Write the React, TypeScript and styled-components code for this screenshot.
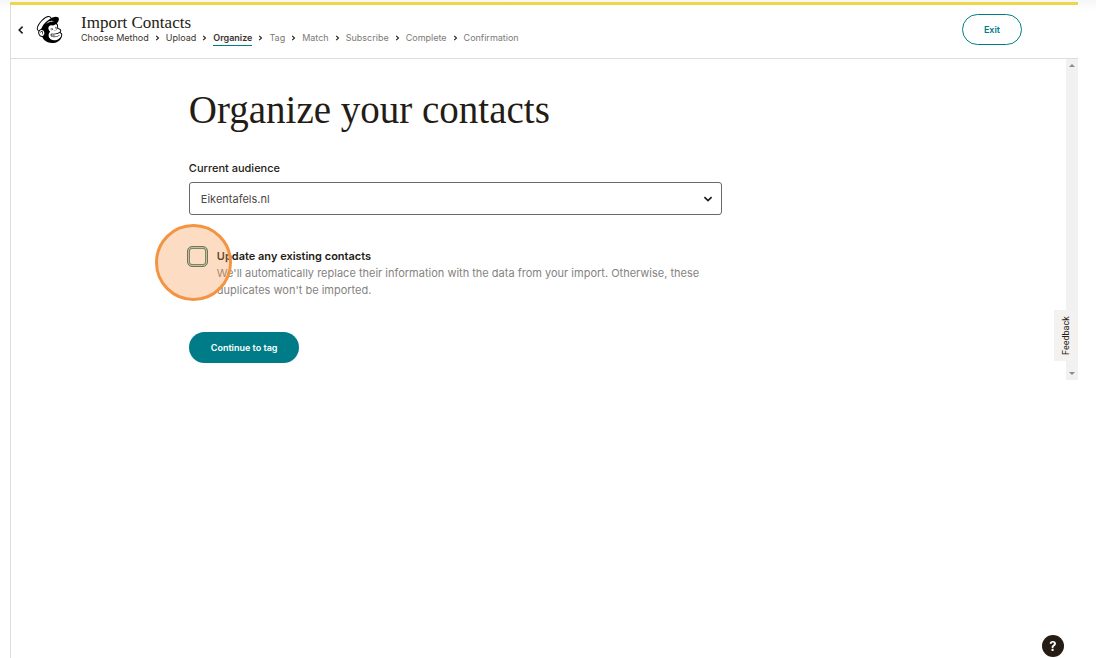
import React from "react";
import styled, { createGlobalStyle } from "styled-components";
import { SiMailchimp } from "react-icons/si";

const sans = `Inter, "Liberation Sans", sans-serif`;
const serif = `"Liberation Serif", serif`;
const ink = "#241c15";
const teal = "#007c89";

const GlobalStyle = createGlobalStyle`
  * { box-sizing: border-box; }
  body { margin: 0; background: #fff; color: ${ink}; font-family: ${sans}; font-size: 11px; }
  h1, h2, p, ol { margin: 0; padding: 0; }
  button, select { font-family: inherit; cursor: pointer; }
`;

const Page = styled.div`
  min-height: 100vh;
  padding: 2px 18px 0 10px;
  display: flex;
  flex-direction: column;
  background: linear-gradient(#f6f6f6, #fff 10px);
`;

const Frame = styled.div`
  flex: 1;
  border-top: 3px solid #efd648;
  background: #fff;
  display: flex;
`;

const Body = styled.div`
  flex: 1;
  border-left: 1px solid #dedddc;
`;

const Header = styled.header`
  display: flex;
  align-items: center;
  height: 54px;
  padding: 0 56px 4px 5px;
  border-bottom: 1px solid #dedddc;
`;

const BackButton = styled.button`
  display: flex;
  padding: 0;
  border: 0;
  background: none;
  color: ${ink};
`;

const Logo = styled.a`
  display: flex;
  margin: 0 18px 0 10px;
  color: #000;
`;

const Titles = styled.div`
  flex: 1;
`;

const Title = styled.h1`
  font: 400 17px/16px ${serif};
`;

const Steps = styled.ol`
  display: flex;
  list-style: none;
  font-size: 9px;
  line-height: 14px;
`;

const Step = styled.li<{ $ahead: boolean }>`
  display: flex;
  align-items: center;
  color: ${(p) => (p.$ahead ? "#7c7a76" : "#3b342e")};
`;

const StepName = styled.span<{ $current: boolean }>`
  font-weight: ${(p) => (p.$current ? 600 : 400)};
  box-shadow: ${(p) => (p.$current ? `0 1px 0 ${teal}` : "none")};
`;

const StepArrow = styled.svg`
  margin: 0 6px;
`;

const ExitButton = styled.button`
  height: 31px;
  padding: 0 21px;
  border: 1px solid ${teal};
  border-radius: 16px;
  background: #fff;
  color: ${teal};
  font-size: 9px;
  font-weight: 600;
`;

const ScrollArea = styled.div`
  position: relative;
  display: grid;
  grid-template-columns: 2fr 6fr 4fr;
`;

const Content = styled.main`
  grid-column: 2;
  padding: 29px 0 17px;
`;

const Heading = styled.h2`
  font: 400 39px/44px ${serif};
  margin-bottom: 28px;
`;

const Label = styled.label`
  display: block;
  font-size: 11px;
  font-weight: 500;
  line-height: 17px;
  margin-bottom: 5px;
`;

const SelectBox = styled.div`
  display: grid;
  align-items: center;
  margin-bottom: 33px;
  > * { grid-area: 1 / 1; }
  svg { justify-self: end; margin-right: 9px; pointer-events: none; }
`;

const Select = styled.select`
  appearance: none;
  width: 100%;
  height: 33px;
  padding: 0 32px 0 11px;
  border: 1px solid #6a6966;
  border-radius: 3px;
  background: #fff;
  color: #4c4747;
  font-size: 11px;
`;

const CheckRow = styled.div`
  position: relative;
  display: flex;
  gap: 9px;
  margin: 0 0 33px -2px;
`;

const Checkbox = styled.input`
  appearance: none;
  flex: none;
  width: 21px;
  height: 21px;
  margin: -2px 0 0;
  border: 1px solid #1f6f68;
  border-radius: 5px;
  background: #fff;
  box-shadow: inset 0 0 0 1px #b5cfc8, inset 0 0 0 2px #4a7a72;
`;

const CheckLabel = styled.label`
  display: block;
  font-size: 11px;
  font-weight: 600;
  line-height: 17px;
`;

const Hint = styled.p`
  font-size: 11px;
  line-height: 17px;
  color: #85837f;
`;

const ClickMarker = styled.div`
  position: absolute;
  left: -32px;
  top: -24px;
  width: 77px;
  height: 77px;
  border: 3px solid #f39443;
  border-radius: 50%;
  background: rgba(247, 148, 72, 0.32);
  pointer-events: none;
`;

const ContinueButton = styled.button`
  height: 31px;
  padding: 0 22px;
  border: 0;
  border-radius: 16px;
  background: ${teal};
  color: #fff;
  font-size: 9px;
  font-weight: 600;
`;

const ScrollTrack = styled.div`
  grid-column: 3;
  justify-self: end;
  display: flex;
  flex-direction: column;
  justify-content: space-between;
  align-items: center;
  width: 12px;
  padding: 5px 0;
  background: #f1f1f1;
`;

const FeedbackTab = styled.button`
  position: absolute;
  right: 0;
  bottom: 19px;
  width: 24px;
  height: 51px;
  padding: 0;
  border: 0;
  background: #f3f2f0;
  color: ${ink};
  font: 9px/24px Roboto, sans-serif;
  span { display: block; writing-mode: vertical-rl; transform: rotate(180deg); width: 24px; height: 51px; }
`;

const HelpButton = styled.button`
  position: fixed;
  right: 32px;
  bottom: 1px;
  width: 22px;
  height: 22px;
  padding: 0;
  border: 0;
  border-radius: 50%;
  background: ${ink};
  color: #fff;
  font-size: 13px;
  font-weight: 700;
`;

const steps = ["Choose Method", "Upload", "Organize", "Tag", "Match", "Subscribe", "Complete", "Confirmation"];
const current = 2;

function Triangle({ down = false }: { down?: boolean }) {
  return (
    <svg width="6" height="3" viewBox="0 0 6 3" fill="#8a8a8a" aria-hidden>
      <path d={down ? "M0 0h6L3 3z" : "M0 3h6L3 0z"} />
    </svg>
  );
}

export default function App() {
  return (
    <Page>
      <GlobalStyle />
      <Frame>
        <Body>
          <Header>
            <BackButton aria-label="Back">
              <svg width="10" height="10" viewBox="0 0 10 10" fill="none" stroke="currentColor" strokeWidth="1.6">
                <path d="M6.6 1.6 3.2 5l3.4 3.4" />
              </svg>
            </BackButton>
            <Logo href="#" aria-label="Mailchimp">
              <SiMailchimp size={27} />
            </Logo>
            <Titles>
              <Title>Import Contacts</Title>
              <Steps>
                {steps.map((name, i) => (
                  <Step key={name} $ahead={i > current}>
                    {i > 0 && (
                      <StepArrow width="5" height="6" viewBox="0 0 5 6" fill="none" stroke={ink} strokeWidth="1.1">
                        <path d="M1.2.8 3.5 3 1.2 5.2" />
                      </StepArrow>
                    )}
                    <StepName $current={i === current}>{name}</StepName>
                  </Step>
                ))}
              </Steps>
            </Titles>
            <ExitButton>Exit</ExitButton>
          </Header>
          <ScrollArea>
            <Content>
              <Heading>Organize your contacts</Heading>
              <Label htmlFor="audience">Current audience</Label>
              <SelectBox>
                <Select id="audience">
                  <option>Eikentafels.nl</option>
                </Select>
                <svg width="10" height="8" viewBox="0 0 10 8" fill="none" stroke={ink} strokeWidth="1.7">
                  <path d="M1.4 2.2 5 5.6l3.6-3.4" />
                </svg>
              </SelectBox>
              <CheckRow>
                <Checkbox type="checkbox" id="update" />
                <div>
                  <CheckLabel htmlFor="update">Update any existing contacts</CheckLabel>
                  <Hint>
                    We'll automatically replace their information with the data from your import. Otherwise, these
                    duplicates won't be imported.
                  </Hint>
                </div>
                <ClickMarker />
              </CheckRow>
              <ContinueButton>Continue to tag</ContinueButton>
            </Content>
            <ScrollTrack>
              <Triangle />
              <Triangle down />
            </ScrollTrack>
            <FeedbackTab>
              <span>Feedback</span>
            </FeedbackTab>
          </ScrollArea>
        </Body>
      </Frame>
      <HelpButton aria-label="Help">?</HelpButton>
    </Page>
  );
}
